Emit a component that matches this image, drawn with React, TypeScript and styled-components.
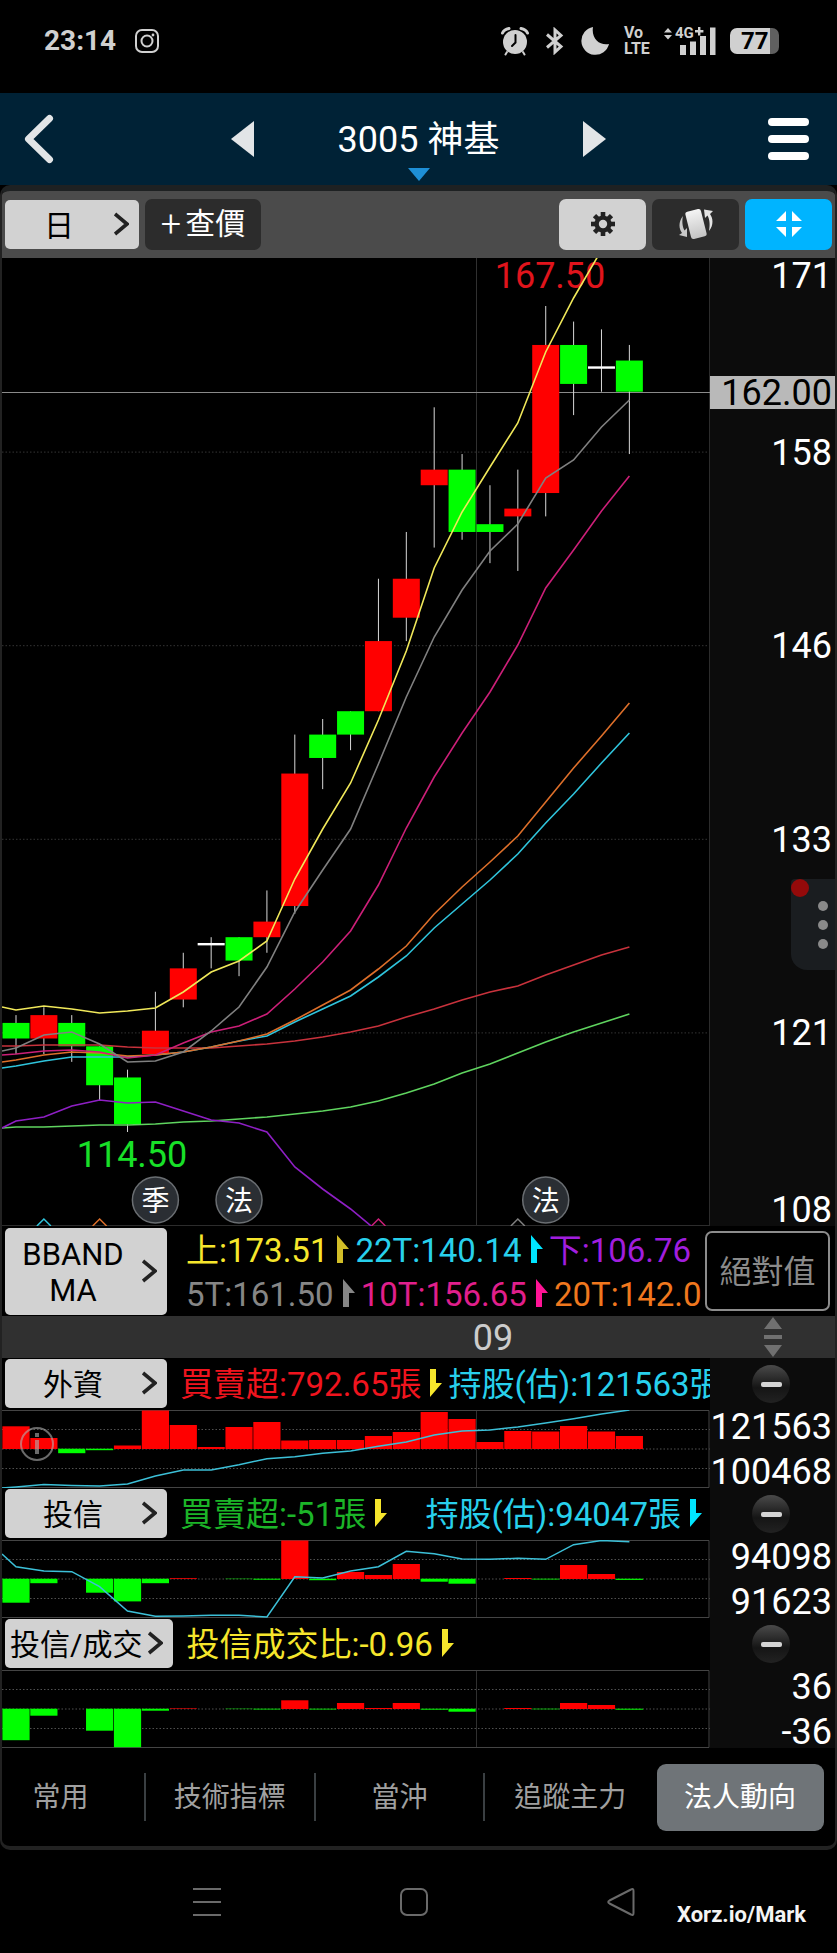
import React from "react";
import styled, { createGlobalStyle } from "styled-components";

const GlobalStyle = createGlobalStyle`
  *, *::before, *::after { box-sizing: border-box; }
  body {
    margin: 0;
    background: #000;
    color: #fff;
    font-family: Roboto, "Noto Sans CJK TC", sans-serif;
  }
  button {
    margin: 0;
    padding: 0;
    border: 0;
    background: none;
    color: inherit;
    font: inherit;
    cursor: pointer;
  }
  svg { display: block; flex: none; }
`;

/* ---------- data ---------- */

type Candle = [open: number, close: number, high: number, low: number];

const CANDLES: Candle[] = [
  [121.5, 120.5, 122, 119.5],
  [120.5, 122, 122.5, 119.5],
  [121.5, 120, 122, 119],
  [120, 117.5, 120, 116.5],
  [118, 115, 118.5, 114.5],
  [119.5, 121, 123.5, 119.5],
  [123, 125, 126, 122.5],
  [126.5, 126.5, 127, 125],
  [127, 125.5, 127, 124.5],
  [127, 128, 130, 126],
  [129, 137.5, 140, 128.5],
  [140, 138.5, 141, 136.5],
  [141.5, 140, 141.5, 139],
  [141.5, 146, 150, 141.5],
  [147.5, 150, 153, 146],
  [156, 157, 161, 152],
  [157, 153, 158, 152.5],
  [153.5, 153, 156, 151],
  [154, 154.5, 157, 150.5],
  [155.5, 165, 167.5, 154],
  [165, 162.5, 166.5, 160.5],
  [163.5, 163.5, 166, 162],
  [164, 162, 165, 158],
];

/* Each series holds its height at the left edge, then one height per candle. */
const SERIES: { color: string; points: number[] }[] = [
  { color: "#5fd45f", points: [870, 869, 869, 868, 867, 867, 866, 864, 863, 861, 859, 856, 853, 849, 843, 835, 826, 815, 806, 795, 784, 774, 765, 756] },
  { color: "#8e1fc4", points: [870, 863, 859, 848, 842, 845, 844, 853, 862, 865, 874, 909, 931, 951, 974] },
  { color: "#c8323c", points: [788, 788, 787, 787, 787, 789, 790, 790, 790, 788, 786, 783, 779, 774, 768, 759, 751, 742, 734, 728, 717, 707, 697, 689] },
  { color: "#2fc4dc", points: [810, 808, 803, 799, 799, 799, 797, 794, 789, 783, 778, 764, 751, 738, 719, 698, 670, 646, 622, 596, 565, 536, 505, 475] },
  { color: "#dd6f2a", points: [804, 802, 797, 794, 795, 798, 797, 794, 789, 783, 776, 762, 747, 732, 711, 688, 656, 629, 604, 578, 544, 510, 478, 445] },
  { color: "#cc1f78", points: [797, 796, 793, 792, 794, 800, 797, 785, 774, 768, 756, 731, 704, 673, 627, 570, 519, 475, 434, 387, 330, 292, 253, 218] },
  { color: "#808080", points: [793, 790, 777, 774, 786, 804, 803, 794, 773, 749, 709, 654, 612, 571, 506, 439, 379, 332, 293, 266, 220, 202, 169, 142] },
  { color: "#f0e85a", points: [749, 752, 748, 751, 755, 753, 750, 734, 714, 703, 683, 621, 571, 525, 462, 393, 310, 254, 209, 165, 94, 40, -8] },
];

const PLOT_W = 708;
const PLOT_H = 968;
const SUB_H = 78;
const MONTH_X = 474.5;
const cx = (i: number) => 14 + 27.88 * i;
const py = (price: number) => (170.58 - price) * 15.585;
const path = (points: number[]) =>
  points.map((y, i) => `${i === 0 ? 0 : cx(i - 1).toFixed(1)},${y}`).join(" ");

/* ---------- shell ---------- */

const Page = styled.div`
  display: flex;
  flex-direction: column;
  width: 100%;
  background: #000;
`;

const StatusBar = styled.div`
  display: flex;
  align-items: center;
  height: 93px;
  padding: 0 58px 12px 44px;
  color: #d0d0d0;
`;

const Clock = styled.time`
  font-size: 28px;
  font-weight: 700;
  line-height: 32px;
  margin-right: 19px;
`;

const StatusIcons = styled.div`
  display: flex;
  align-items: center;
  margin-left: auto;
  gap: 14px;
`;

const VoLte = styled.span`
  display: flex;
  flex-direction: column;
  width: 26px;
  font-size: 16px;
  font-weight: 700;
  line-height: 16px;
`;

const Battery = styled.span`
  display: flex;
  align-items: center;
  width: 49px;
  height: 26px;
  padding-left: 11px;
  border-radius: 7px;
  background: linear-gradient(to right, #d0d0d0 40px, #606060 40px);
  color: #000;
  font-size: 24px;
  font-weight: 700;
  line-height: 26px;
`;

const Header = styled.header`
  display: grid;
  grid-template-columns: 1fr auto 1fr;
  align-items: center;
  height: 92px;
  padding: 0 23px;
  background: #002236;
`;

const IconButton = styled.button<{ $align?: "start" | "center" | "end" }>`
  display: flex;
  justify-self: ${(p) => p.$align ?? "start"};
`;

const StockPicker = styled.div`
  position: relative;
  display: flex;
  align-items: center;
  gap: 84px;
`;

const Title = styled.h1`
  margin: 0;
  padding-top: 2px;
  font-size: 36px;
  font-weight: 400;
  line-height: 42px;
`;

const DropMark = styled.svg`
  position: absolute;
  left: 50%;
  bottom: -20px;
  transform: translateX(-50%);
`;

const Frame = styled.main`
  display: flex;
  flex-direction: column;
  border: 2px solid #222;
  border-top: 6px solid #1e2122;
  border-bottom-width: 4px;
  border-radius: 10px;
  overflow: hidden;
`;

const Toolbar = styled.div`
  display: flex;
  align-items: center;
  gap: 6px;
  height: 67px;
  padding: 0 3px 1px;
  background: #4b4b4b;
`;

const ToolButton = styled.button<{ $tone: "light" | "dark" | "blue"; $wide?: boolean; $push?: boolean }>`
  display: flex;
  align-items: center;
  justify-content: center;
  gap: 4px;
  width: ${(p) => (p.$wide ? 116 : 87)}px;
  height: 51px;
  margin-left: ${(p) => (p.$push ? "auto" : 0)};
  border-radius: 7px;
  background: ${(p) => ({ light: "#d2d2d2", dark: "#2c2c2c", blue: "#00b4ff" })[p.$tone]};
  font-size: 30px;
  line-height: 36px;
`;

const Plus = styled.span`
  font-size: 36px;
  font-weight: 300;
`;

const MenuButton = styled.button<{ $min: number; $tall?: boolean }>`
  display: flex;
  flex: none;
  align-items: center;
  gap: 6px;
  min-width: ${(p) => p.$min}px;
  height: ${(p) => (p.$tall ? 87 : 49)}px;
  padding: 0 10px 0 5px;
  border-radius: 5px;
  background: #d2d2d2;
  color: #000;
  font-size: ${(p) => (p.$tall ? 31 : 30)}px;
  line-height: 36px;
`;

const MenuLabel = styled.span`
  flex: 1;
  padding-top: 3px;
  text-align: center;
  white-space: pre-line;
`;

/* ---------- chart rows ---------- */

const ChartRow = styled.section`
  position: relative;
  display: grid;
  grid-template-columns: minmax(0, 1fr) 125px;
`;

const Plot = styled.svg`
  width: 100%;
  height: auto;
`;

const PriceAxis = styled.div`
  display: grid;
  grid-template-rows: 1fr 2fr 2fr 2fr 2fr 1fr;
  justify-items: end;
  align-items: center;
  padding: 2px 3px 0 0;
  background: #0c0c0c;
  font-size: 36px;
  line-height: 32px;

  & > :first-child { align-self: start; }
  & > :last-child { align-self: end; }
`;

const LastPrice = styled.output`
  position: absolute;
  right: 0;
  top: 12.2%;
  width: 125px;
  padding: 1px 3px 0 0;
  background: #b9b9b9;
  color: #000;
  font-size: 36px;
  line-height: 32px;
  text-align: right;
`;

const FloatHandle = styled.button`
  position: absolute;
  right: -2px;
  top: 64.2%;
  display: flex;
  flex-direction: column;
  align-items: center;
  justify-content: center;
  gap: 9px;
  width: 46px;
  height: 91px;
  padding-left: 18px;
  border-radius: 4px 0 0 16px;
  background: #1a1d20;
`;

const Dot = styled.i`
  width: 10px;
  height: 10px;
  border-radius: 5px;
  background: #8a8a8a;
`;

const Alert = styled.i`
  position: absolute;
  left: 0;
  top: 0;
  width: 18px;
  height: 18px;
  border-radius: 9px;
  background: #940a0a;
`;

const LegendRow = styled.section`
  display: flex;
  align-items: center;
  height: 90px;
  padding: 0 5px 0 3px;
`;

const LegendLines = styled.div`
  flex: 1;
  min-width: 0;
  margin: 0 2px 0 19px;
  overflow: hidden;
`;

const LegendLine = styled.div`
  display: flex;
  flex: 1;
  align-items: center;
  gap: 6px;
  min-width: 0;
  height: 44px;
  overflow: hidden;
  font-size: 33px;
  line-height: 40px;
  white-space: nowrap;
`;

const Reading = styled.span<{ $color: string; $end?: boolean }>`
  display: flex;
  flex: none;
  align-items: center;
  gap: 9px;
  margin-left: ${(p) => (p.$end ? "auto" : 0)};
  color: ${(p) => p.$color};
`;

const ReadingText = styled.span`
  padding-top: 3px;
`;

const AbsoluteButton = styled.button`
  width: 125px;
  height: 80px;
  padding-top: 2px;
  border: 2px solid #8c8c8c;
  border-radius: 7px;
  color: #8a8a8a;
  font-size: 32px;
  line-height: 40px;
`;

const DateStrip = styled.div`
  display: grid;
  grid-template-columns: minmax(0, 1fr) 125px;
  align-items: center;
  justify-items: center;
  height: 42px;
  background: #303030;
  color: #ccc;
  font-size: 36px;
  line-height: 40px;
`;

const Month = styled.span`
  justify-self: stretch;
  padding: 2px 0 0 66.5%;
`;

const PanelHead = styled.div<{ $clip?: boolean }>`
  display: flex;
  align-items: center;
  gap: 13px;
  height: 52px;
  padding: 0 ${(p) => (p.$clip ? 0 : 8)}px 2px 3px;
  overflow: hidden;
`;

const RemoveCell = styled.div`
  display: flex;
  align-items: center;
  justify-content: center;
  padding-right: 3px;
  background: #0c0c0c;
`;

const RemoveButton = styled.button`
  display: flex;
  align-items: center;
  justify-content: center;
  width: 38px;
  height: 38px;
  border-radius: 19px;
  background: linear-gradient(#4a4a4a, #151515 60%, #222);
`;

const Minus = styled.i`
  width: 21px;
  height: 5px;
  border-radius: 2px;
  background: #d4d4d4;
`;

const ValueCell = styled.div`
  display: flex;
  flex-direction: column;
  justify-content: space-between;
  align-items: flex-end;
  padding: 1px 3px 0 0;
  background: #0c0c0c;
  font-size: 36px;
  line-height: 32px;
`;

const Tabs = styled.nav`
  display: grid;
  grid-template-columns: 143fr 170fr 170fr 170fr 170fr;
  align-items: center;
  height: 98px;
  padding: 0 10px 0 1px;
`;

const Tab = styled.button<{ $first?: boolean; $plain?: boolean }>`
  height: 48px;
  padding: 2px ${(p) => (p.$first ? 26 : 0)}px 0 0;
  border-right: ${(p) => (p.$plain ? 0 : 2)}px solid #3a3f42;
  color: #a0a0a0;
  font-size: 28px;
  line-height: 36px;
  white-space: nowrap;
`;

const ActiveTab = styled(Tab)`
  justify-self: center;
  width: calc(100% - 3px);
  height: 67px;
  border: 0;
  border-radius: 9px;
  background: #6f7478;
  color: #fff;
`;

const SystemNav = styled.nav`
  position: relative;
  display: grid;
  grid-template-columns: repeat(3, 207px);
  justify-content: center;
  align-items: center;
  height: 103px;
  padding-right: 9px;
`;

const Watermark = styled.span`
  position: absolute;
  right: 31px;
  bottom: 24px;
  color: #f4f4f4;
  font-size: 22px;
  font-weight: 700;
  line-height: 28px;
`;

/* ---------- drawings ---------- */

const Chevron = () => (
  <svg width="15" height="24" viewBox="0 0 15 24" fill="none" stroke="#222" strokeWidth="3.6">
    <path d="M1 2 13 12 1 22" />
  </svg>
);

const Flag = ({ down, color }: { down?: boolean; color?: string }) => (
  <svg width="12" height="28" viewBox="0 0 12 28" fill={color ?? "currentColor"}>
    <path d={down ? "M0 0H6V14H12L0 28Z" : "M0 0 12 14H6V28H0Z"} />
  </svg>
);

const Menu = ({ label, min = 162, tall }: { label: string; min?: number; tall?: boolean }) => (
  <MenuButton $min={min} $tall={tall}>
    <MenuLabel>{label}</MenuLabel>
    <Chevron />
  </MenuButton>
);

interface ValueProps {
  color: string;
  text: string;
  trend?: "up" | "down";
  trendColor?: string;
  end?: boolean;
}

const Value = ({ color, text, trend, trendColor, end }: ValueProps) => (
  <Reading $color={color} $end={end}>
    <ReadingText>{text}</ReadingText>
    {trend && <Flag down={trend === "down"} color={trendColor} />}
  </Reading>
);

const Marker = ({ index, label }: { index: number; label: string }) => (
  <g>
    <circle cx={cx(index)} cy="942" r="23" fill="#2a2e33" stroke="#6a6e72" strokeWidth="1.5" />
    <text x={cx(index)} y="953" textAnchor="middle" fontSize="28" fill="#fff">
      {label}
    </text>
  </g>
);

const Caret = ({ index, color }: { index: number; color: string }) => (
  <path d={`M${cx(index) - 7} 968l7 -7 7 7`} fill="none" stroke={color} strokeWidth="1.5" />
);

function PricePlot() {
  return (
    <Plot viewBox={`0 0 ${PLOT_W} ${PLOT_H}`} role="img" aria-label="3005 神基 日K線">
      {[1, 2, 3, 4].map((n) => (
        <line key={n} x1="0" x2={PLOT_W} y1={193.6 * n + 0.5} y2={193.6 * n + 0.5} stroke="#343434" strokeDasharray="1.5 2" />
      ))}
      <line x1={MONTH_X} x2={MONTH_X} y1="0" y2={PLOT_H} stroke="#303030" />
      <line x1="707.5" x2="707.5" y1="0" y2={PLOT_H} stroke="#2c2c2c" />
      <line x1="0" x2={PLOT_W} y1="967.5" y2="967.5" stroke="#2c2c2c" />
      <line x1="0" x2={PLOT_W} y1="134.5" y2="134.5" stroke="#8a8a8a" />
      <text x="548" y="30" textAnchor="middle" fontSize="36" fill="#e0141c">167.50</text>
      <text x="130" y="909" textAnchor="middle" fontSize="36" fill="#18e028">114.50</text>
      {CANDLES.map(([open, close, high, low], i) => {
        const x = cx(i);
        const top = py(Math.max(open, close));
        const bottom = py(Math.min(open, close));
        return (
          <g key={i}>
            <line x1={x} x2={x} y1={py(high)} y2={py(low)} stroke="#d8d8d8" strokeWidth="1" />
            {open === close ? (
              <rect x={x - 13.5} y={top - 2} width="27" height="2.4" fill="#fff" />
            ) : (
              <rect x={x - 13.5} y={top} width="27" height={bottom - top} fill={close > open ? "#ff0000" : "#00ff00"} />
            )}
          </g>
        );
      })}
      {SERIES.map((s) => (
        <polyline key={s.color} points={path(s.points)} fill="none" stroke={s.color} strokeWidth="1.6" />
      ))}
      <Caret index={1} color="#2fc4dc" />
      <Caret index={3} color="#dd6f2a" />
      <Caret index={13} color="#cc1f78" />
      <Caret index={18} color="#808080" />
      <Marker index={5} label="季" />
      <Marker index={8} label="法" />
      <Marker index={19} label="法" />
    </Plot>
  );
}

function SubPlot({ bars, line, info, label }: { bars: number[]; line?: number[]; info?: boolean; label: string }) {
  return (
    <Plot viewBox={`0 0 ${PLOT_W} ${SUB_H}`} role="img" aria-label={label}>
      {[19.5, 39, 58.5].map((y) => (
        <line key={y} x1="0" x2={PLOT_W} y1={y} y2={y} stroke="#505050" strokeDasharray="1.5 2" />
      ))}
      <line x1={MONTH_X} x2={MONTH_X} y1="0" y2={SUB_H} stroke="#303030" />
      <path d="M0 .5H707V77.5H0" fill="none" stroke="#444" />
      {bars.map((h, i) => (
        <rect
          key={i}
          x={cx(i) - 13.6}
          y={h > 0 ? 39 - h : 38.7}
          width="27.2"
          height={Math.abs(h)}
          fill={h > 0 ? "#ff0000" : "#00ff00"}
        />
      ))}
      {line && <polyline points={path(line)} fill="none" stroke="#3cc0d8" strokeWidth="1.5" />}
      {info && (
        <g stroke="#b0b0b0" strokeOpacity="0.6" fill="none">
          <circle cx="35" cy="34" r="16" strokeWidth="2" />
          <path d="M35 30V44" strokeWidth="4" />
          <path d="M35 23V27" strokeWidth="4" />
        </g>
      )}
    </Plot>
  );
}

interface PanelProps {
  name: string;
  children: React.ReactNode;
  high: string;
  low: string;
  bars: number[];
  line?: number[];
  info?: boolean;
  clip?: boolean;
}

function Panel({ name, children, high, low, bars, line, info, clip }: PanelProps) {
  return (
    <ChartRow>
      <PanelHead $clip={clip}>
        <Menu label={name} />
        <LegendLine>{children}</LegendLine>
      </PanelHead>
      <RemoveCell>
        <RemoveButton aria-label="移除">
          <Minus />
        </RemoveButton>
      </RemoveCell>
      <SubPlot bars={bars} line={line} info={info} label={name} />
      <ValueCell>
        <span>{high}</span>
        <span>{low}</span>
      </ValueCell>
    </ChartRow>
  );
}

const RED = "#f0141e";
const GREEN = "#1cb428";
const YELLOW = "#f6e62c";
const CYAN = "#28d0ec";
const BRIGHT_CYAN = "#00e5ff";

export default function App() {
  return (
    <Page>
      <GlobalStyle />
      <StatusBar>
        <Clock>23:14</Clock>
        <svg width="24" height="24" viewBox="0 0 24 24" fill="none" stroke="#d0d0d0" strokeWidth="2">
          <rect x="1" y="1" width="22" height="22" rx="6" />
          <circle cx="12" cy="12" r="5.5" />
          <circle cx="18" cy="6" r="1.4" fill="#d0d0d0" stroke="none" />
        </svg>
        <StatusIcons>
          <svg width="30" height="30" viewBox="0 0 30 30" fill="none" stroke="#d0d0d0" strokeWidth="3" strokeLinecap="round">
            <circle cx="15" cy="16" r="12" fill="#d0d0d0" stroke="none" />
            <path d="M2.500 7Q4 3.500 9 2.500M27.500 7Q26 3.500 21 2.500" />
            <path d="M7 26 5.500 28.500M23 26 24.500 28.500" strokeWidth="2" />
            <path d="M15.500 9V16.500L12 20" stroke="#000" strokeWidth="2" />
          </svg>
          <svg width="22" height="28" viewBox="-2 0 22 28" fill="none" stroke="#d0d0d0" strokeWidth="3">
            <path d="M1 7.500 15 19.500 9 25V3L15 8.500 1 20.500" />
          </svg>
          <svg width="30" height="28" viewBox="0 0 30 28">
            <path d="M13 0A14 14 0 1 0 29 17C20 19 11 12 13 0Z" fill="#d0d0d0" />
          </svg>
          <VoLte>
            <span>Vo</span>
            <span>LTE</span>
          </VoLte>
          <svg width="52" height="38" viewBox="0 -4 52 38" fill="#d0d0d0">
            <path d="M0 6.500 4 2 8 6.500ZM0 9 4 13.500 8 9Z" />
            <text x="11" y="12" fontSize="15" fontWeight="700">4G</text>
            <path d="M34 1h2.400v3h3v2.400h-3v3H34v-3h-3V4h3Z" />
            <path d="M16 19h6v10h-6ZM26 15.500h6V29h-6ZM36 10h6V29h-6ZM46 1.500h5.500V29H46Z" />
          </svg>
          <Battery>77</Battery>
        </StatusIcons>
      </StatusBar>

      <Header>
        <IconButton aria-label="返回">
          <svg width="31" height="50" viewBox="0 0 31 50" fill="none" stroke="#e2e5e7" strokeWidth="7" strokeLinecap="round" strokeLinejoin="round">
            <path d="M26.500 4.500 5.500 25 26.500 45.500" />
          </svg>
        </IconButton>
        <StockPicker>
          <IconButton aria-label="上一檔">
            <svg width="23" height="36" viewBox="0 0 23 36">
              <path d="M23 0V36L0 18Z" fill="#e2e5e7" />
            </svg>
          </IconButton>
          <Title>3005 神基</Title>
          <DropMark width="22" height="13" viewBox="0 0 22 13">
            <path d="M0 0H22L11 13Z" fill="#1e8fd6" />
          </DropMark>
          <IconButton aria-label="下一檔">
            <svg width="23" height="36" viewBox="0 0 23 36">
              <path d="M0 0V36L23 18Z" fill="#e2e5e7" />
            </svg>
          </IconButton>
        </StockPicker>
        <IconButton $align="end" aria-label="選單">
          <svg width="46" height="42" viewBox="0 0 46 42" fill="#fff">
            <rect width="41" height="8" rx="4" />
            <rect y="17" width="41" height="8" rx="4" />
            <rect y="34" width="41" height="8" rx="4" />
          </svg>
        </IconButton>
      </Header>

      <Frame>
        <Toolbar>
          <Menu label="日" min={134} />
          <ToolButton $tone="dark" $wide>
            <Plus>+</Plus>查價
          </ToolButton>
          <ToolButton $tone="light" $push aria-label="設定">
            <svg width="24" height="24" viewBox="-12 -12 24 24">
              <g fill="#222">
                {[0, 45, 90, 135].map((a) => (
                  <rect key={a} x="-2.300" y="-12" width="4.600" height="24" transform={`rotate(${a})`} />
                ))}
                <circle r="8.600" />
              </g>
              <circle r="4.200" fill="#d2d2d2" />
            </svg>
          </ToolButton>
          <ToolButton $tone="dark" aria-label="旋轉">
            <svg width="36" height="32" viewBox="0 0 36 32">
              <defs>
                <linearGradient id="card" x1="0" y1="0" x2="0" y2="1">
                  <stop offset="0" stopColor="#f4f4f4" />
                  <stop offset="1" stopColor="#c4c4c4" />
                </linearGradient>
              </defs>
              <rect x="10" y="2" width="16" height="28" rx="2.500" fill="url(#card)" transform="rotate(-14 18 16)" />
              <path d="M5 8C0 14 1 21 4 25L1 27 9 29 9 20 6.500 22.500C4 18 4 12 5 8Z" fill="#c8c8c8" />
              <path d="M31 23C36 17 35 10 32 6L35 3 26 1.500 27 10 29.500 7.500C32 12 32 18 31 23Z" fill="#e4e4e4" />
            </svg>
          </ToolButton>
          <ToolButton $tone="blue" aria-label="縮小">
            <svg width="26" height="26" viewBox="0 0 26 26" fill="#fff">
              <path d="M10 0V10H0ZM16 0V10H26ZM10 26V16H0ZM16 26V16H26Z" />
            </svg>
          </ToolButton>
        </Toolbar>

        <ChartRow>
          <PricePlot />
          <PriceAxis>
            {["171", "158", "146", "133", "121", "108"].map((v) => (
              <span key={v}>{v}</span>
            ))}
          </PriceAxis>
          <LastPrice>162.00</LastPrice>
          <FloatHandle aria-label="更多">
            <Alert />
            <Dot />
            <Dot />
            <Dot />
          </FloatHandle>
        </ChartRow>

        <LegendRow>
          <Menu label={"BBAND\nMA"} tall />
          <LegendLines>
            <LegendLine>
              <Value color={YELLOW} text="上:173.51" trend="up" trendColor="#d2be28" />
              <Value color={CYAN} text="22T:140.14" trend="up" trendColor={BRIGHT_CYAN} />
              <Value color="#a01ede" text="下:106.76" />
            </LegendLine>
            <LegendLine>
              <Value color="#868686" text="5T:161.50" trend="up" />
              <Value color="#e01f8c" text="10T:156.65" trend="up" trendColor="#ff1496" />
              <Value color="#f0781e" text="20T:142.0" />
            </LegendLine>
          </LegendLines>
          <AbsoluteButton>絕對值</AbsoluteButton>
        </LegendRow>

        <DateStrip>
          <Month>09</Month>
          <svg width="18" height="40" viewBox="0 0 18 40" fill="#707070">
            <path d="M9 0 18 12H0ZM0 18H18V22H0ZM9 40 18 28H0Z" />
          </svg>
        </DateStrip>

        <Panel
          name="外資"
          clip
          info
          high="121563"
          low="100468"
          bars={[22.7, 11, -4.5, -1.5, 3.5, 38.5, 24, 2, 22, 27, 8.5, 9, 9, 13, 17, 37, 30, 7, 18, 17.5, 23, 17.5, 13]}
          line={[78, 77, 74.5, 75.5, 76, 74, 66, 60, 60, 54.7, 48.7, 46.7, 43.3, 41, 36.3, 32, 25, 21, 20, 17, 13, 8.7, 4, 0]}
        >
          <Value color={RED} text="買賣超:792.65張" trend="down" trendColor={YELLOW} />
          <Value color={CYAN} text="持股(估):121563張" />
        </Panel>
        <Panel
          name="投信"
          high="94098"
          low="91623"
          bars={[-24, -4.5, 0, -14, -22.7, -4.5, 0.8, 0, -0.4, -1, 38.5, -1.5, 7, 4, 15, -3, -5, 0, 1, -0.8, 14, 5, -1.2]}
          line={[14, 26.7, 31, 31.7, 46.7, 71, 76.3, 76, 75.3, 75.3, 77, 36.7, 38, 31, 26.7, 11.3, 13.7, 19, 19.3, 18.3, 19.3, 4.7, 0.5, 1.7]}
        >
          <Value color={GREEN} text="買賣超:-51張" trend="down" trendColor={YELLOW} />
          <Value color={CYAN} text="持股(估):94047張" trend="down" trendColor={BRIGHT_CYAN} end />
        </Panel>
        <Panel
          name="投信/成交"
          high="36"
          low="-36"
          bars={[-31.5, -7, 0, -22, -38.5, -2, 0.6, 0, -0.4, -0.8, 8.7, -0.8, 6, 1, 6, -1, -3, 0, 1, -0.6, 6, 4, -1]}
        >
          <Value color={YELLOW} text="投信成交比:-0.96" trend="down" />
        </Panel>

        <Tabs>
          <Tab $first>常用</Tab>
          <Tab>技術指標</Tab>
          <Tab>當沖</Tab>
          <Tab $plain>追蹤主力</Tab>
          <ActiveTab $plain>法人動向</ActiveTab>
        </Tabs>
      </Frame>

      <SystemNav>
        <IconButton $align="center" aria-label="最近">
          <svg width="28" height="30" viewBox="0 0 28 30" stroke="#6a6a6a" strokeWidth="2">
            <path d="M0 2H28M0 15H28M0 28H28" />
          </svg>
        </IconButton>
        <IconButton $align="center" aria-label="主畫面">
          <svg width="28" height="28" viewBox="0 0 28 28" fill="none" stroke="#6a6a6a" strokeWidth="2">
            <rect x="1" y="1" width="26" height="26" rx="6" />
          </svg>
        </IconButton>
        <IconButton $align="center" aria-label="上一頁">
          <svg width="28" height="28" viewBox="0 0 28 28" fill="none" stroke="#6a6a6a" strokeWidth="2" strokeLinejoin="round">
            <path d="M24 1.500Q26.500 0 26.500 3V25Q26.500 28 24 26.500L2.500 15.500Q0 14 2.500 12.500Z" />
          </svg>
        </IconButton>
        <Watermark>Xorz.io/Mark</Watermark>
      </SystemNav>
    </Page>
  );
}
